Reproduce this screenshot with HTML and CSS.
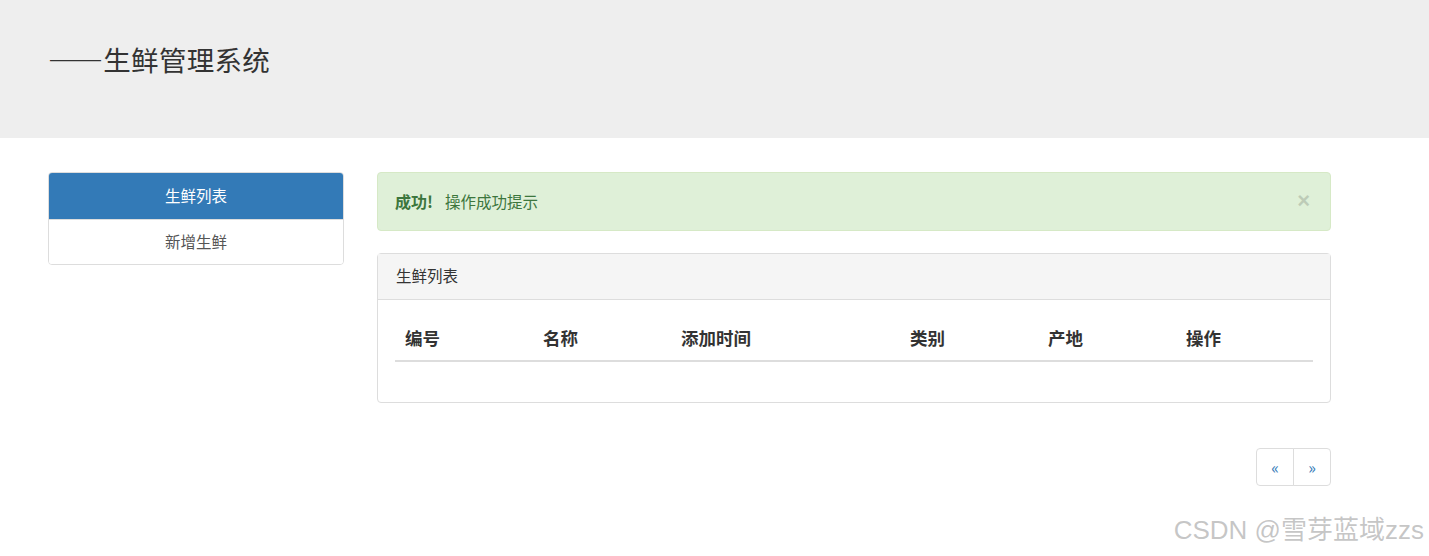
FILE: index.html
```html
<!DOCTYPE html>
<html lang="zh-CN">
<head>
  <meta charset="UTF-8">
  <meta name="viewport" content="width=device-width, initial-scale=1.0">
  <title>生鲜管理系统</title>
  <link rel="stylesheet" href="styles.css">
</head>
<body>
  <div class="jumbotron">
    <h3 class="title">——生鲜管理系统</h3>
  </div>

  <div class="layout">
    <div class="sidebar">
      <div class="list-group">
        <a class="list-item active" href="#">生鲜列表</a>
        <a class="list-item" href="#">新增生鲜</a>
      </div>
    </div>

    <div class="main">
      <div class="alert">
        <span><strong>成功!</strong><span class="msg">操作成功提示</span></span>
        <button class="close">&times;</button>
      </div>

      <div class="panel">
        <div class="panel-heading">生鲜列表</div>
        <div class="panel-body">
          <table class="table">
            <thead>
              <tr>
                <th class="col-id">编号</th>
                <th class="col-name">名称</th>
                <th class="col-time">添加时间</th>
                <th class="col-type">类别</th>
                <th class="col-origin">产地</th>
                <th>操作</th>
              </tr>
            </thead>
            <tbody></tbody>
          </table>
        </div>
      </div>

      <div class="pager-wrap">
        <ul class="pagination">
          <li><a href="#">&laquo;</a></li>
          <li><a href="#">&raquo;</a></li>
        </ul>
      </div>
    </div>
  </div>

  <div class="watermark">CSDN @雪芽蓝域zzs</div>
</body>
</html>
```

FILE: styles.css
```css
body {
  margin: 0;
  font-family: "Noto Sans CJK SC", "Liberation Sans", sans-serif;
  font-size: 15.5px;
  line-height: 22px;
  color: #333;
  background: #fff;
}
a {
  text-decoration: none;
}
.jumbotron {
  background: #eee;
  height: 138px;
  box-sizing: border-box;
  padding: 43px 48px 0;
}
.title {
  margin: 0;
  font-size: 27.5px;
  font-weight: 400;
  line-height: 32px;
  letter-spacing: 0.3px;
  color: #333;
}
.layout {
  display: flex;
  gap: 33px;
  padding: 34px 0 0 48px;
}
.sidebar {
  width: 296px;
  flex: none;
}
.list-group {
  border: 1px solid #ddd;
  border-radius: 4px;
  overflow: hidden;
}
.list-item {
  display: block;
  padding: 10px 16px 12px;
  text-align: center;
  color: #555;
  background: #fff;
}
.list-item + .list-item {
  border-top: 1px solid #ddd;
}
.list-item.active {
  background: #337ab7;
  color: #fff;
  padding-top: 11px;
  padding-bottom: 13px;
}
.main {
  width: 954px;
  flex: none;
}
.alert {
  display: flex;
  justify-content: space-between;
  align-items: center;
  height: 59px;
  box-sizing: border-box;
  padding: 0 20px 2px 17px;
  background: #dff0d8;
  border: 1px solid #d6e9c6;
  border-radius: 4px;
  color: #3c763d;
  margin-bottom: 22px;
}
.alert strong {
  font-weight: 700;
  font-size: 16px;
}
.msg {
  margin-left: 12px;
}
.close {
  border: none;
  background: none;
  padding: 0;
  font-size: 22px;
  font-weight: 700;
  color: #000;
  opacity: 0.15;
  cursor: pointer;
  font-family: "Liberation Sans", sans-serif;
}
.panel {
  border: 1px solid #ddd;
  border-radius: 4px;
  margin-bottom: 45px;
}
.panel-heading {
  background: #f5f5f5;
  border-bottom: 1px solid #ddd;
  padding: 10px 18px 13px;
  color: #333;
}
.panel-body {
  padding: 17px 17px 18px;
}
.table {
  width: 100%;
  border-collapse: collapse;
  margin-bottom: 22px;
}
.table th {
  text-align: left;
  font-size: 17.5px;
  font-weight: 700;
  padding: 9px 10px 10px;
  line-height: 24px;
  border-bottom: 2px solid #ddd;
  color: #333;
}
.col-id,
.col-name {
  width: 118px;
}
.col-time {
  width: 209px;
}
.col-type,
.col-origin {
  width: 118px;
}
.pager-wrap {
  display: flex;
  justify-content: flex-end;
}
.pagination {
  display: flex;
  list-style: none;
  margin: 0;
  padding: 0;
}
.pagination a {
  display: block;
  width: 36px;
  height: 36px;
  line-height: 36px;
  text-align: center;
  color: #337ab7;
  border: 1px solid #ddd;
  background: #fff;
  font-size: 16px;
}
.pagination li + li a {
  margin-left: -1px;
}
.pagination li:first-child a {
  border-radius: 4px 0 0 4px;
}
.pagination li:last-child a {
  border-radius: 0 4px 4px 0;
}
.watermark {
  position: absolute;
  right: 5px;
  top: 512px;
  font-family: "Liberation Sans", "Noto Sans CJK SC", sans-serif;
  font-size: 26px;
  line-height: 36px;
  color: rgba(160, 160, 160, 0.6);
}
```
